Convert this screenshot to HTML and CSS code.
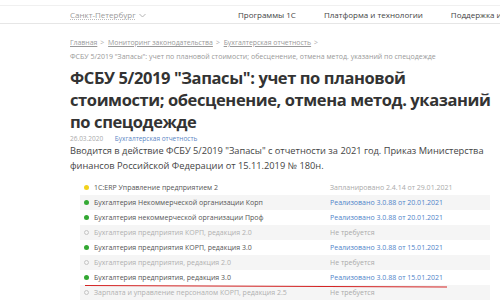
FILE: index.html
```html
<!DOCTYPE html>
<html lang="ru">
  <head>
    <meta charset="UTF-8" />
    <meta name="viewport" content="width=device-width, initial-scale=1.0" />
    <title>ФСБУ 5/2019 Запасы</title>
    <link rel="stylesheet" href="styles.css">
  </head>
  <body>
    <div class="topbar">
      <div class="topbar-inner">
        <span class="city"><span class="city-name">Санкт-Петербург</span>
          <svg class="city-arrow" width="7" height="5" viewBox="0 0 7 5"><path d="M0.5 1 L3.5 4 L6.5 1" fill="none" stroke="#b5b5b5" stroke-width="1"/></svg>
        </span>
        <nav class="menu">
          <a class="menu-item">Программы 1С</a>
          <a class="menu-item">Платформа и технологии</a>
          <a class="menu-item">Поддержка и обучение</a>
        </nav>
      </div>
    </div>

    <div class="page">
      <div class="crumbs">
        <a class="crumb">Главная</a><span class="sep">&gt;</span>
        <a class="crumb">Мониторинг законодательства</a><span class="sep">&gt;</span>
        <a class="crumb">Бухгалтерская отчетность</a><span class="sep">&gt;</span>
      </div>
      <div class="crumbs-current">ФСБУ 5/2019 "Запасы": учет по плановой стоимости; обесценение, отмена метод. указаний по спецодежде</div>

      <h1 class="title">ФСБУ 5/2019 "Запасы": учет по плановой стоимости; обесценение, отмена метод. указаний по спецодежде</h1>

      <div class="meta">
        <span class="date">26.03.2020</span>
        <a class="meta-link">Бухгалтерская отчетность</a>
      </div>

      <p class="lead">Вводится в действие ФСБУ 5/2019 "Запасы" с отчетности за 2021 год. Приказ Министерства финансов Российской Федерации от 15.11.2019 № 180н.</p>

      <table class="status">
        <tr>
          <td class="prog"><i class="dot dot-plan"></i>1С:ERP Управление предприятием 2</td>
          <td class="state">Запланировано 2.4.14 от 29.01.2021</td>
        </tr>
        <tr>
          <td class="prog"><i class="dot dot-done"></i>Бухгалтерия Некоммерческой организации Корп</td>
          <td class="state state-done">Реализовано 3.0.88 от 20.01.2021</td>
        </tr>
        <tr>
          <td class="prog"><i class="dot dot-done"></i>Бухгалтерия некоммерческой организации Проф</td>
          <td class="state state-done">Реализовано 3.0.88 от 20.01.2021</td>
        </tr>
        <tr class="off">
          <td class="prog"><i class="dot dot-none"></i>Бухгалтерия предприятия КОРП, редакция 2.0</td>
          <td class="state">Не требуется</td>
        </tr>
        <tr>
          <td class="prog"><i class="dot dot-done"></i>Бухгалтерия предприятия КОРП, редакция 3.0</td>
          <td class="state state-done">Реализовано 3.0.88 от 15.01.2021</td>
        </tr>
        <tr class="off">
          <td class="prog"><i class="dot dot-none"></i>Бухгалтерия предприятия, редакция 2.0</td>
          <td class="state">Не требуется</td>
        </tr>
        <tr class="marked">
          <td class="prog"><i class="dot dot-done"></i>Бухгалтерия предприятия, редакция 3.0</td>
          <td class="state state-done">Реализовано 3.0.88 от 15.01.2021</td>
        </tr>
        <tr class="off">
          <td class="prog"><i class="dot dot-none"></i>Зарплата и управление персоналом КОРП, редакция 2.5</td>
          <td class="state">Не требуется</td>
        </tr>
      </table>
    </div>
  </body>
</html>
```

FILE: styles.css
```css
body {
  margin: 0;
  width: 500px;
  height: 300px;
  overflow: hidden;
  background-color: white;
  font-family: "Open Sans", Arial, sans-serif;
  color: #444;
}
a {
  cursor: pointer;
}
.topbar {
  margin-top: 5px;
  border-top: 1px solid #f0f0f0;
  border-bottom: 1px solid #e6e6e6;
}
.topbar-inner {
  display: flex;
  align-items: center;
  height: 17px;
  padding-left: 70px;
  white-space: nowrap;
  font-size: 8px;
}
.city {
  width: 168px;
  flex-shrink: 0;
  color: #9a9a9a;
}
.city-name {
  text-decoration: underline dotted #bbb;
}
.city-arrow {
  margin-left: 1px;
  vertical-align: middle;
}
.menu {
  display: flex;
  gap: 28px;
}
.menu-item {
  color: #444;
  flex-shrink: 0;
}
.page {
  padding-left: 70px;
  width: 425px;
}
.crumbs {
  margin-top: 14px;
  font-size: 6.9px;
  color: #aaa;
  white-space: nowrap;
}
.crumb {
  color: #999;
  text-decoration: underline;
}
.sep {
  margin: 0 2px 0 3px;
}
.crumbs-current {
  margin-top: 5px;
  font-size: 7px;
  color: #999;
  white-space: nowrap;
}
.title {
  margin: 6px 0 0;
  width: 421px;
  font-size: 16.5px;
  line-height: 22px;
  letter-spacing: -0.4px;
  font-weight: 700;
  color: #333;
}
.meta {
  margin-top: 1px;
  font-size: 6.5px;
  line-height: 10px;
}
.date {
  color: #aaa;
  margin-right: 10px;
}
.meta-link {
  color: #5b86c4;
}
.lead {
  margin: -1px 0 0;
  font-size: 9.25px;
  line-height: 15px;
  color: #444;
}
.status {
  margin: 7px 0 0 10px;
  width: 410px;
  border-collapse: collapse;
  font-size: 7px;
}
.status tr {
  height: 15px;
}
.status tr:nth-child(even) {
  background-color: #f5f5f5;
}
.status td {
  padding: 0;
  white-space: nowrap;
}
.prog {
  width: 246px;
  padding-left: 4px !important;
  color: #555;
}
.state {
  color: #aaa;
}
.state-done {
  color: #4f84c9;
}
.off .prog {
  color: #b0b0b0;
}
.dot {
  display: inline-block;
  width: 5px;
  height: 5px;
  border-radius: 50%;
  margin-right: 5px;
  vertical-align: 0;
}
.dot-plan {
  background-color: #f2d21c;
}
.dot-done {
  background-color: #33a833;
}
.dot-none {
  width: 3px;
  height: 3px;
  border: 1px solid #c4c4c4;
}
.marked td:first-child {
  position: relative;
}
.marked td:first-child::after {
  content: "";
  position: absolute;
  left: 5px;
  bottom: -1px;
  width: 362px;
  height: 1px;
  background-color: #d42424;
  transform: rotate(0.25deg);
  transform-origin: left;
}
```
